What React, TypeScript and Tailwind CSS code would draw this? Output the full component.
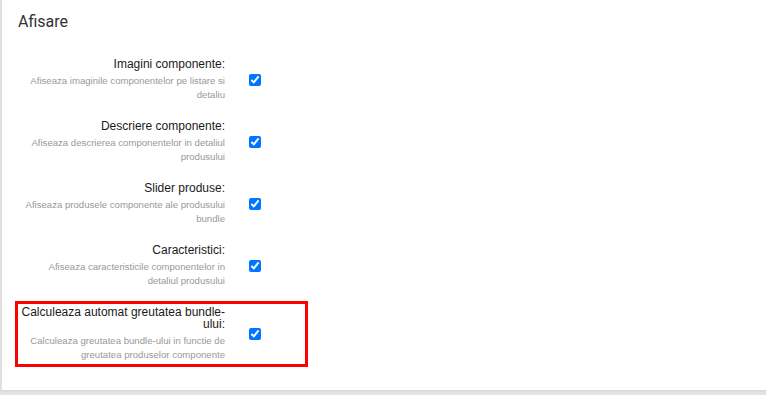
import { useState } from 'react'

interface Setting {
  id: string
  label: string
  description: string
  highlighted?: boolean
}

const settings: Setting[] = [
  {
    id: 'imagini',
    label: 'Imagini componente:',
    description: 'Afiseaza imaginile componentelor pe listare si detaliu'
  },
  {
    id: 'descriere',
    label: 'Descriere componente:',
    description: 'Afiseaza descrierea componentelor in detaliul produsului'
  },
  {
    id: 'slider',
    label: 'Slider produse:',
    description: 'Afiseaza produsele componente ale produsului bundle'
  },
  {
    id: 'caracteristici',
    label: 'Caracteristici:',
    description: 'Afiseaza caracteristicile componentelor in detaliul produsului'
  },
  {
    id: 'greutate',
    label: 'Calculeaza automat greutatea bundle-ului:',
    description: 'Calculeaza greutatea bundle-ului in functie de greutatea produselor componente',
    highlighted: true
  }
]

export default function App() {
  const [values, setValues] = useState<Record<string, boolean>>({
    imagini: true,
    descriere: true,
    slider: true,
    caracteristici: true,
    greutate: true
  })

  return (
    <div className="h-[395px] w-[766px] overflow-hidden bg-[#e4e4e4] font-['Liberation_Sans',Arial,sans-serif]">
      <div className="h-[390px] border-l-2 border-[#e0e0e0] bg-white shadow-[0_1px_2px_rgba(0,0,0,0.08)]">
        {/* Titlu */}
        <h2 className="pl-[16px] pt-[11px] font-['Roboto',sans-serif] text-[16px] leading-[22px] text-[#333]">
          Afisare
        </h2>

        {/* Setari */}
        <div className="mt-[20px] flex flex-col gap-[8px] pl-[13px]">
          {settings.map((s) => (
            <div
              key={s.id}
              className={`flex w-[293px] items-center border-[3px] py-[2px] ${
                s.highlighted ? 'border-[#ff0000]' : 'border-transparent'
              }`}
            >
              <div className="w-[207px] shrink-0 text-right">
                <label
                  htmlFor={s.id}
                  className="block text-[12px] leading-[12px] text-[#1a1a1a]"
                >
                  {s.label}
                </label>
                <p className="mt-[4px] text-[9.6px] leading-[14px] text-[#999]">
                  {s.description}
                </p>
              </div>
              <input
                id={s.id}
                type="checkbox"
                checked={values[s.id]}
                onChange={(e) => setValues((prev) => ({ ...prev, [s.id]: e.target.checked }))}
                className="ml-[24px] h-[12px] w-[12px] accent-[#0075ff]"
              />
            </div>
          ))}
        </div>
      </div>
    </div>
  )
}
